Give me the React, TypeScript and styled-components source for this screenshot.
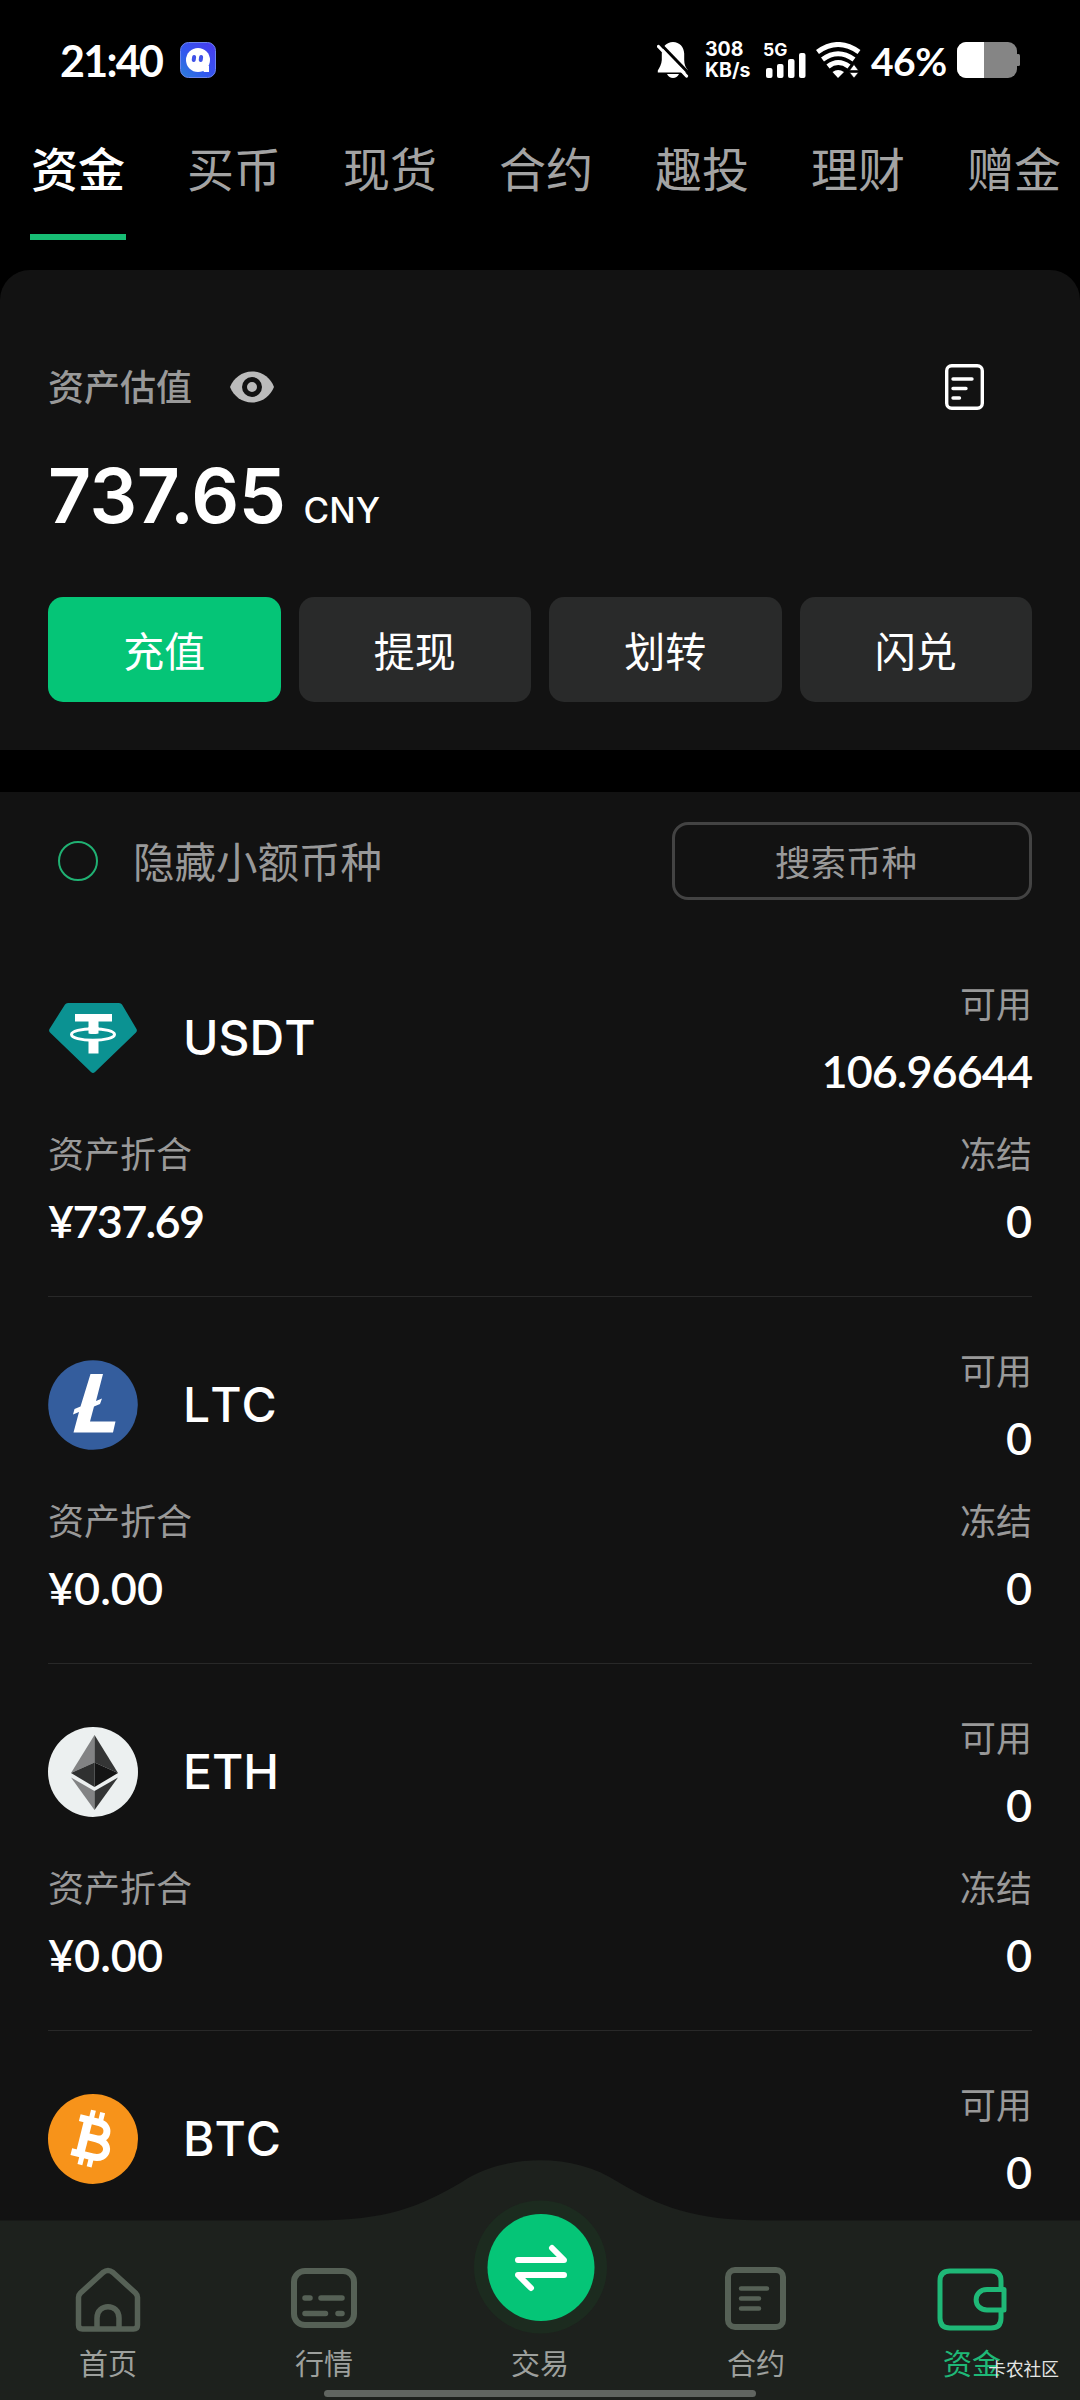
import React from "react";
import styled, { createGlobalStyle } from "styled-components";

const cjk = `"Noto Sans CJK SC", sans-serif`;

const GlobalStyle = createGlobalStyle`
  * { box-sizing: border-box; }
  body { margin: 0; background: #000; font-family: Inter, ${cjk}; }
  button { border: 0; margin: 0; padding: 0; background: none; font: inherit; color: inherit; }
`;

const Screen = styled.div`
  position: relative;
  display: flex;
  flex-direction: column;
  width: 1080px;
  height: 2400px;
  overflow: hidden;
  background: #000;
  color: #fff;
`;

const StatusBar = styled.header`
  display: flex;
  justify-content: space-between;
  height: 120px;
  padding: 0 60px;
`;

const StatusGroup = styled.div`
  display: flex;
  align-items: center;
`;

const Clock = styled.span`
  width: 120px;
  font: 700 43px/50px Lato, sans-serif;
  letter-spacing: -1.7px;
  margin-top: 1px;
`;

const Speed = styled.div`
  display: flex;
  flex-direction: column;
  width: 59px;
  font: 700 19.5px/21px Inter, sans-serif;
`;

const Signal = styled.div`
  width: 52px;
  svg { display: block; overflow: visible; }
`;

const BatteryText = styled.span`
  width: 86px;
  font: 700 39px/46px Lato, sans-serif;
  letter-spacing: -0.5px;
  margin-top: 2px;
`;

const Tabs = styled.nav`
  display: flex;
  gap: 60px;
  height: 150px;
  padding-left: 30px;
`;

const Tab = styled.button<{ $active?: boolean }>`
  flex: none;
  display: flex;
  align-items: flex-start;
  width: 96px;
  height: 120px;
  padding: 12px 0 0 1px;
  border-bottom: 6px solid ${(p) => (p.$active ? "#17bd74" : "transparent")};
  font: ${(p) => (p.$active ? 500 : 400)} 47px/70px ${cjk};
  color: ${(p) => (p.$active ? "#fff" : "#a3a3a3")};
  white-space: nowrap;
`;

const Summary = styled.section`
  height: 480px;
  padding: 87px 48px 0;
  border-radius: 30px 30px 0 0;
  background: #121212;
`;

const SummaryHead = styled.div`
  display: flex;
  align-items: center;
  height: 60px;
  padding-right: 48px;
`;

const SummaryTitle = styled.span`
  margin: 0 38px 4px 0;
  font: 500 36px/56px ${cjk};
  color: #999;
`;

const Spacer = styled.span`
  flex: 1;
`;

const Total = styled.div`
  display: flex;
  align-items: baseline;
  gap: 18px;
  height: 180px;
  padding-top: 34px;
  font: 600 75px/90px Inter, sans-serif;
`;

const Amount = styled.span`
  letter-spacing: -0.5px;
`;

const Currency = styled.span`
  font: 500 35px/40px Inter, sans-serif;
`;

const Actions = styled.div`
  display: grid;
  grid-template-columns: repeat(4, 1fr);
  gap: 18px;
`;

const Action = styled.button<{ $primary?: boolean }>`
  height: 105px;
  border-radius: 15px;
  background: ${(p) => (p.$primary ? "#05c577" : "#292a2a")};
  font: 400 41px/103px ${cjk};
  color: #fff;
`;

const Holdings = styled.section`
  margin-top: 42px;
  flex: 1;
  padding: 0 48px;
  background: #121212;
`;

const Filters = styled.div`
  display: flex;
  align-items: center;
  height: 138px;
`;

const Radio = styled.span`
  width: 40px;
  height: 40px;
  margin: 0 35px 1px 10px;
  border: 2.5px solid #20b173;
  border-radius: 50%;
`;

const FilterLabel = styled.span`
  flex: 1;
  font: 400 41.5px/60px ${cjk};
  color: #999;
  margin-bottom: 2px;
`;

const Search = styled.div`
  width: 360px;
  height: 78px;
  padding-right: 12px;
  border: 3px solid #434343;
  border-radius: 16px;
  font: 400 35.5px/72px ${cjk};
  color: #999;
  text-align: center;
`;

const Row = styled.article`
  display: grid;
  grid-template-columns: 1fr 1fr;
  row-gap: 14px;
  height: 367px;
  padding: 40px 0;
  border-bottom: 1px solid #282828;
`;

const Coin = styled.div`
  display: flex;
  align-items: center;
  gap: 44px;
  height: 136px;
`;

const CoinName = styled.span`
  font: 500 48px/60px Inter, sans-serif;
  font-kerning: none;
`;

const Pair = styled.div<{ $right?: boolean }>`
  display: flex;
  flex-direction: column;
  height: 136px;
  align-items: ${(p) => (p.$right ? "flex-end" : "flex-start")};
`;

const Label = styled.span`
  margin-bottom: 4px;
  font: 400 36px/64px ${cjk};
  color: #999;
`;

const Value = styled.span<{ $spacing?: number }>`
  font: 600 45px/66px Lato, sans-serif;
  letter-spacing: ${(p) => p.$spacing ?? 0}px;
`;

const BottomBar = styled.footer`
  position: absolute;
  left: 0;
  right: 0;
  bottom: 0;
  height: 240px;
`;

const BarShape = styled.svg`
  position: absolute;
  inset: 0;
`;

const NavItems = styled.nav`
  position: relative;
  display: grid;
  grid-template-columns: repeat(5, 1fr);
  height: 227px;
  margin-bottom: 3px;
`;

const NavItem = styled.button<{ $active?: boolean }>`
  display: flex;
  flex-direction: column;
  align-items: center;
  justify-content: flex-end;
  font: 400 29px/50px ${cjk};
  color: ${(p) => (p.$active ? "#1fb877" : "#9da09d")};
  svg { display: block; }
`;

const HomeIndicator = styled.div`
  position: relative;
  width: 432px;
  height: 7px;
  margin: 0 auto;
  border-radius: 4px;
  background: #606560;
`;

const Watermark = styled.span`
  position: absolute;
  right: 21px;
  bottom: 19px;
  font: 400 17.7px/26px ${cjk};
  color: #e4e6e4;
`;

const AppBadge = () => (
  <svg width="36" height="36" viewBox="0 0 36 36">
    <defs>
      <linearGradient id="badge" x1="0" y1="1" x2="1" y2="0">
        <stop offset="0" stopColor="#2c80d8" />
        <stop offset=".4" stopColor="#3159ee" />
        <stop offset="1" stopColor="#4a39ef" />
      </linearGradient>
    </defs>
    <rect x=".5" y=".5" width="35" height="35" rx="8" fill="url(#badge)" stroke="#6b84ee" />
    <circle cx="18" cy="18" r="12" fill="#fff" />
    <path d="M20 24h9v6h-5z" fill="#fff" />
    <rect x="12" y="13" width="4" height="7" rx="2" fill="#3f52e8" transform="rotate(8 14 16)" />
    <rect x="19" y="13" width="4" height="7" rx="2" fill="#3f52e8" transform="rotate(8 21 16)" />
  </svg>
);

const BellOff = () => (
  <svg width="48" height="36" viewBox="0 0 48 36" fill="#fff">
    <path d="M16 0C9.500 0 5 5 4.800 11.500V18C4.600 22.500 2.500 25.500.8 28.500V30.500H31V28.500C28.500 25 27.200 22.500 27.200 18V11.500C27 5 22.500 0 16 0Z" />
    <path d="M10 32H22Q20 36 16 36T10 32Z" />
    <path d="M2 .5L34 33.500" stroke="#000" strokeWidth="3" />
    <path d="M1.500 4.500L29.500 34" stroke="#fff" strokeWidth="3.200" strokeLinecap="round" />
  </svg>
);

const SignalIcon = () => (
  <svg width="44" height="36" viewBox="0 0 44 36" fill="#fff">
    <text x="-1" y="14" fontFamily="Inter, sans-serif" fontWeight="700" fontSize="17.500">5G</text>
    <rect x="2" y="26" width="6.500" height="10" rx="2" />
    <rect x="13" y="22" width="6.500" height="14" rx="2" />
    <rect x="24" y="17" width="6.500" height="19" rx="2" />
    <rect x="35" y="11" width="6.500" height="25" rx="2" />
  </svg>
);

const WifiIcon = () => (
  <svg width="55" height="36" viewBox="0 0 55 36" fill="none" stroke="#fff" strokeWidth="5">
    <path d="M1.500 10Q22-5 43 10" />
    <path d="M6.500 17.500Q22 6 38 17.500" />
    <path d="M12 24.500Q22 16.500 33 24.500" />
    <path d="M16.500 30Q22 26 28 30L22 36Z" fill="#fff" stroke="none" />
    <path d="M33.500 28.500L38 22.500L42.500 28.500ZM33.500 30.500H42.500L38 36Z" fill="#fff" stroke="#000" strokeWidth=".6" />
  </svg>
);

const BatteryIcon = () => (
  <svg width="63" height="36" viewBox="0 0 63 36">
    <clipPath id="battery"><rect width="60" height="36" rx="9" /></clipPath>
    <g clipPath="url(#battery)">
      <rect width="60" height="36" fill="#858585" />
      <rect width="27" height="36" fill="#fff" />
    </g>
    <rect x="59" y="12" width="4" height="12" rx="1.500" fill="#858585" />
  </svg>
);

const EyeIcon = () => (
  <svg width="44" height="32" viewBox="0 0 44 32">
    <path d="M22 .5C12 .5 3.500 7 0 16C3.500 25 12 31.500 22 31.500S40.500 25 44 16C40.500 7 32 .5 22 .5Z" fill="#bbb" />
    <circle cx="22" cy="16" r="7.500" fill="#bbb" stroke="#121212" strokeWidth="5" />
  </svg>
);

const RecordsIcon = () => (
  <svg width="39" height="46" viewBox="0 0 39 46" fill="none" stroke="#fff" strokeWidth="3.400" strokeLinecap="round">
    <rect x="1.700" y="1.700" width="35.600" height="42.600" rx="5" />
    <path d="M8 15H27M8 24.500H21M8 34H14.500" />
  </svg>
);

const UsdtIcon = () => (
  <svg width="91" height="90" viewBox="0 0 91 90">
    <path d="M20 10H71Q73 10 74 11.500L88.500 36Q89.500 38 88 39.500L47 79Q45 81 43 79L2 39.500Q.5 38 1.500 36L17 11.500Q18 10 20 10Z" fill="#0b9292" />
    <path d="M27 21H64V28.500H50.500V37H40.500V28.500H27Z" fill="#fff" />
    <ellipse cx="45" cy="41.500" rx="21.500" ry="5.800" fill="none" stroke="#fff" strokeWidth="3" />
    <path d="M40.500 34H50.500V40.500Q45 41.500 40.500 40.500ZM40.500 46H50.500V60.500H40.500Z" fill="#fff" />
  </svg>
);

const LtcIcon = () => (
  <svg width="91" height="90" viewBox="0 0 91 90">
    <circle cx="45" cy="45" r="44.800" fill="#345d9d" />
    <path d="M42.500 14H55L48 41L54 38.500L52 44L46 46.500L42 61.500H67.500L65 72.500H25.500L31 52L25 54.500L26.500 49L32.500 46.500Z" fill="#fff" />
  </svg>
);

const EthIcon = () => (
  <svg width="91" height="90" viewBox="0 0 91 90">
    <circle cx="45" cy="45" r="45" fill="#ecf0f0" />
    <path d="M46.500 8L23 46L46.500 35.500Z" fill="#828384" />
    <path d="M46.500 8L70 46L46.500 35.500Z" fill="#343535" />
    <path d="M23 46L46.500 35.500V60Z" fill="#2f3030" />
    <path d="M70 46L46.500 35.500V60Z" fill="#141414" />
    <path d="M23 50.500L46.500 64V83Z" fill="#828384" />
    <path d="M70 50.500L46.500 64V83Z" fill="#343535" />
  </svg>
);

const BtcIcon = () => (
  <svg width="91" height="90" viewBox="0 0 91 90">
    <circle cx="45" cy="45" r="45" fill="#f7931a" />
    <g transform="rotate(14 45 45)" fill="none" stroke="#fff">
      <path d="M27 27.500H47C60 27.500 60 44 48 44H37M27 62.500H49C65 62.500 65 44 48 44" strokeWidth="7" />
      <path d="M36 27V63" strokeWidth="8.500" />
      <path d="M38.500 17V28M48 17V28M38.500 62V73M48 62V73" strokeWidth="5" />
    </g>
  </svg>
);

const HomeIcon = () => (
  <svg width="66" height="70" viewBox="0 0 66 70" fill="none" stroke="#566156" strokeWidth="5.500" strokeLinejoin="round">
    <path d="M3.500 30.500Q3.500 28 5.500 26L28 5.500Q33 1.500 38 5.500L60.500 26Q62.500 28 62.500 30.500V58Q62.500 62 58.500 62H7.500Q3.500 62 3.500 58Z" />
    <path d="M22 61V51C22 36 44 36 44 51V61" />
  </svg>
);

const MarketIcon = () => (
  <svg width="68" height="70" viewBox="0 0 68 70" fill="none" stroke="#566156" strokeWidth="6" strokeLinecap="round">
    <rect x="4" y="4" width="60" height="54" rx="11" />
    <path d="M15 31H20M31 31H52M15 46.500H35.500M48 46.500H52" strokeWidth="5.500" />
  </svg>
);

const SwapIcon = () => (
  <svg width="134" height="137" viewBox="0 0 134 137" fill="none" stroke="#fff" strokeWidth="6" strokeLinecap="round" strokeLinejoin="round">
    <circle cx="67.500" cy="67" r="66.500" fill="#1c2b1f" stroke="none" />
    <circle cx="68" cy="67.500" r="53.500" fill="#05c577" stroke="none" />
    <path d="M45 60H91L79 48M91 75H45L58 88" />
  </svg>
);

const ContractIcon = () => (
  <svg width="62" height="70" viewBox="0 0 62 70" fill="none" stroke="#566156" strokeWidth="6" strokeLinecap="round">
    <rect x="3" y="3" width="55" height="57" rx="7" />
    <path d="M16 21.500H42M16 31.500H34M16 41.500H34" strokeWidth="4.500" />
  </svg>
);

const WalletIcon = () => (
  <svg width="70" height="70" viewBox="0 0 70 70" fill="none" stroke="#1fb877" strokeWidth="5">
    <path d="M64 22V14Q64 4 54 4H13Q3 4 3 14V51Q3 61 13 61H54Q64 61 64 51V43" />
    <path d="M67 22.500H50C35.500 22.500 35.500 43 50 43H67Z" strokeLinejoin="round" />
  </svg>
);

const tabs = ["资金", "买币", "现货", "合约", "趣投", "理财", "赠金"];
const actions = ["充值", "提现", "划转", "闪兑"];
const coins = [
  { name: "USDT", icon: UsdtIcon, available: "106.96644", worth: "¥737.69" },
  { name: "LTC", icon: LtcIcon, available: "0", worth: "¥0.00" },
  { name: "ETH", icon: EthIcon, available: "0", worth: "¥0.00" },
  { name: "BTC", icon: BtcIcon, available: "0", worth: "" },
];
const navItems = [
  { label: "首页", icon: HomeIcon },
  { label: "行情", icon: MarketIcon },
  { label: "交易", icon: SwapIcon },
  { label: "合约", icon: ContractIcon },
  { label: "资金", icon: WalletIcon },
];

const spacingFor = (text: string) => (text.length > 8 ? -1 : text.length > 6 ? -1.7 : 0);

export default function App() {
  return (
    <Screen>
      <GlobalStyle />
      <StatusBar>
        <StatusGroup>
          <Clock>21:40</Clock>
          <AppBadge />
        </StatusGroup>
        <StatusGroup>
          <BellOff />
          <Speed><span>308</span><span>KB/s</span></Speed>
          <Signal><SignalIcon /></Signal>
          <WifiIcon />
          <BatteryText>46%</BatteryText>
          <BatteryIcon />
        </StatusGroup>
      </StatusBar>

      <Tabs>
        {tabs.map((t, i) => <Tab key={t} $active={i === 0}>{t}</Tab>)}
      </Tabs>

      <Summary>
        <SummaryHead>
          <SummaryTitle>资产估值</SummaryTitle>
          <EyeIcon />
          <Spacer />
          <RecordsIcon />
        </SummaryHead>
        <Total><Amount>737.65</Amount><Currency>CNY</Currency></Total>
        <Actions>
          {actions.map((a, i) => <Action key={a} $primary={i === 0}>{a}</Action>)}
        </Actions>
      </Summary>

      <Holdings>
        <Filters>
          <Radio />
          <FilterLabel>隐藏小额币种</FilterLabel>
          <Search>搜索币种</Search>
        </Filters>
        {coins.map(({ name, icon: Icon, available, worth }) => (
          <Row key={name}>
            <Coin><Icon /><CoinName>{name}</CoinName></Coin>
            <Pair $right>
              <Label>可用</Label>
              <Value $spacing={spacingFor(available)}>{available}</Value>
            </Pair>
            {worth && (
              <>
                <Pair>
                  <Label>资产折合</Label>
                  <Value $spacing={spacingFor(worth)}>{worth}</Value>
                </Pair>
                <Pair $right><Label>冻结</Label><Value>0</Value></Pair>
              </>
            )}
          </Row>
        ))}
      </Holdings>

      <BottomBar>
        <BarShape width="1080" height="240" viewBox="0 0 1080 240">
          <path d="M0 60.500H315C385 60.500 420 47 462 22C505-7 575-7 618 22C660 47 695 60.500 765 60.500H1080V240H0Z" fill="#1d211d" />
        </BarShape>
        <NavItems>
          {navItems.map(({ label, icon: Icon }, i) => (
            <NavItem key={label + i} $active={i === 4}><Icon />{label}</NavItem>
          ))}
        </NavItems>
        <HomeIndicator />
        <Watermark>卡农社区</Watermark>
      </BottomBar>
    </Screen>
  );
}
